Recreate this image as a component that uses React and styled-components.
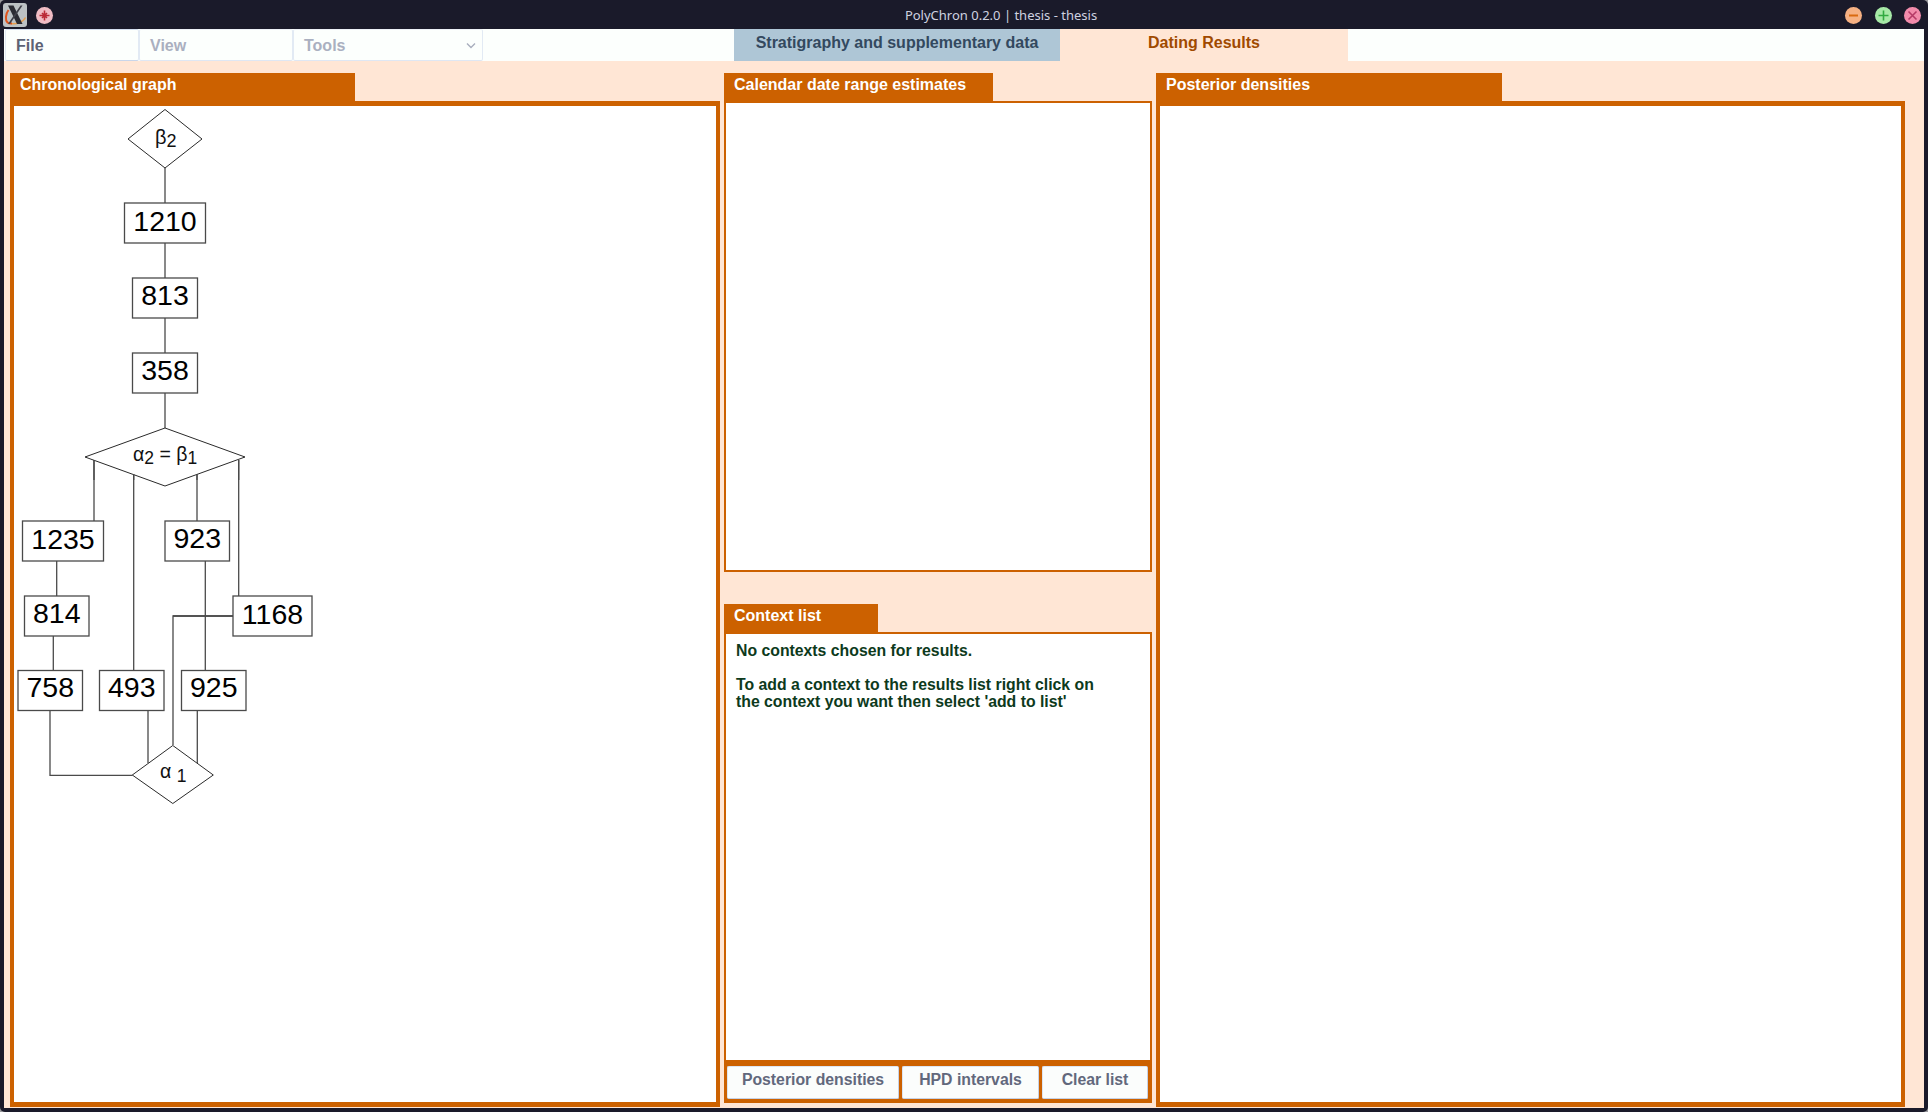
import React from "react";
import styled, { createGlobalStyle } from "styled-components";

const Global = createGlobalStyle`
  html, body { margin: 0; padding: 0; background: #9a9a9e; }
  body { width: 1928px; height: 1112px; overflow: hidden; font-family: "Liberation Sans", Arial, sans-serif; }
  #root { width: 1928px; height: 1112px; }
`;

const Window = styled.div`
  width: 1928px; height: 1112px; box-sizing: border-box;
  display: flex; flex-direction: column;
  background: #1a1a2a; border-radius: 5px; overflow: hidden;
  padding: 0 4px 4px;
`;

const TitleBar = styled.header`
  height: 29px; flex: none; position: relative;
  display: flex; align-items: center; justify-content: space-between;
  margin: 0 -4px; padding: 0 7px 0 3px;
`;
const TitleGroup = styled.div`display: flex; align-items: center; gap: ${p => p.$gap}px;`;
const AppIcon = styled.div`
  width: 24px; height: 24px; border-radius: 3px; background: #bcc1c4; flex: none;
  display: flex; align-items: center; justify-content: center; margin-top: 1px;
`;
const Dot = styled.div`
  width: 17px; height: 17px; border-radius: 50%; background: ${p => p.$bg}; flex: none;
  display: flex; align-items: center; justify-content: center; margin-top: 1px;
`;
const TitleText = styled.div`
  position: absolute; left: 74px; right: 0; top: 0; height: 29px; line-height: 30px; text-align: center;
  font-family: "Noto Sans", sans-serif; font-size: 13px; color: #cfd2e0;
  pointer-events: none;
`;

const MenuBar = styled.nav`
  height: 32px; flex: none; display: flex; background: #fcfffd; padding-left: 1px;
`;
const MenuItem = styled.div`
  width: ${p => p.$w}px; height: 32px; box-sizing: border-box; flex: none;
  display: flex; align-items: center; justify-content: space-between;
  padding: 2px 5px 0 ${p => p.$pl}px;
  border: 1px solid #e2eaf4; border-top-color: ${p => p.$on ? "#d5dff0" : "#eef2f8"};
  border-bottom: 1px solid ${p => p.$on ? "#c9d6ea" : "#dfe7f3"}; border-radius: 2px;
  font-size: 16px; font-weight: bold; color: ${p => p.$on ? "#5c6274" : "#aab0c0"};
`;
const TabSpacer = styled.div`width: 251px; flex: none;`;
const Tab = styled.div`
  width: ${p => p.$w}px; height: 32px; flex: none; text-align: center; line-height: 28px;
  font-size: 16px; font-weight: bold;
  background: ${p => p.$active ? "#ffe6d5" : "#aec6d6"};
  color: ${p => p.$active ? "#a04a00" : "#33495f"};
`;

const Workspace = styled.main`
  flex: 1; display: flex; gap: 4px; background: #ffe6d5;
  padding: 12px 19px 1px 6px; min-height: 0;
`;
const Column = styled.section`
  width: ${p => p.$w}px; flex: none; display: flex; flex-direction: column;
  padding-bottom: ${p => p.$pb || 0}px;
`;
const Heading = styled.h2`
  margin: 0; width: ${p => p.$w}px; height: 28px; flex: none; box-sizing: border-box;
  background: #cc6100; color: #fff; font-size: 16px; font-weight: bold;
  line-height: 18px; padding: 3px 0 0 ${p => p.$pl}px;
`;
const BigBox = styled.div`
  flex: 1; background: #fff; min-height: 0; box-sizing: border-box;
  border: 4px solid #cc6100; border-top-width: 5px; border-bottom-width: 5px;
`;
const ThinBox = styled.div`
  height: ${p => p.$h}px; flex: none; box-sizing: border-box; background: #fff;
  border: 2px solid #cc6100; ${p => p.$open && "border-bottom: 0;"}
  margin-bottom: ${p => p.$mb || 0}px;
`;
const Notice = styled.div`
  padding: 7.5px 0 0 10px;
  font-size: 15.8px; font-weight: bold; line-height: 17px; color: #0d3a1c;
`;
const NoticeLine = styled.div`min-height: 17px;`;
const ButtonBar = styled.div`
  height: 43px; flex: none; box-sizing: border-box; background: #cc6100;
  display: flex; gap: 3px; padding: 6px 4px 4px 3px;
`;
const Btn = styled.button`
  width: ${p => p.$w}px; box-sizing: border-box; padding: 0 0 6px; margin: 0;
  background: #fbfdfc; border: 1px solid #dde5f1; border-bottom: 1px solid #c7d2e6;
  border-right: 1px solid #c7d2e6; border-radius: 2px;
  font-family: inherit; font-size: 15.8px; font-weight: bold; color: #62687c;
`;
const GraphSvg = styled.svg`display: block;`;

const boxes = [
  ["1210", 124.5, 203, 81, 40],
  ["813", 132.5, 278, 65, 40],
  ["358", 132.5, 353, 65, 40],
  ["1235", 22.5, 521, 81, 40],
  ["923", 165, 521, 64.5, 40],
  ["814", 24.5, 596, 64.5, 40],
  ["1168", 233, 596, 79, 40],
  ["758", 18, 670.5, 64.5, 40],
  ["493", 99.5, 670.5, 64.5, 40],
  ["925", 181.5, 670.5, 64.5, 40],
];
const edges = [
  "M165 168V203", "M165 243V278", "M165 318V353", "M165 393V428",
  "M94 460V521", "M133.7 474V670.5", "M197 474V521", "M238.7 460V596",
  "M56.7 561V596", "M53.3 636V670.5", "M205.3 561V670.5",
  "M233 616H173V745", "M50 710.5V775.3H132.5", "M148 710.5V763", "M197.3 710.5V763",
];
const LINE = "#4a4a4a";

const Graph = () => (
  <GraphSvg viewBox="14 106 702 996" width="702" height="996" fontFamily="'Liberation Sans', Arial, sans-serif">
    <g stroke={LINE} strokeWidth="1.3" fill="none">
      {edges.map(d => <path key={d} d={d} />)}
    </g>
    <g stroke="#2a2a2a" strokeWidth="1" fill="#fff">
      <polygon points="165,109.5 202,139 165,168 128,139" />
      <polygon points="165,428 245,457 165,486 85,457" />
      <polygon points="172.8,745.5 213.3,775 172.8,803.5 132.3,775" />
    </g>
    <path d="M94 460V480M133.7 474V480M197 474V480M238.7 460V480" stroke={LINE} strokeWidth="1.3" fill="none" />
    {boxes.map(([label, x, y, w, h]) => (
      <g key={label}>
        <rect x={x} y={y} width={w} height={h} fill="#fff" stroke={LINE} strokeWidth="1.3" />
        <text x={x + w / 2} y={y + (label.length === 4 ? 27.5 : 26.5)} fontSize="28.5" textAnchor="middle" fill="#000">{label}</text>
      </g>
    ))}
    <path d="M233 616H173" stroke={LINE} strokeWidth="1.3" fill="none" />
    <text x="155" y="144" fontSize="20" fill="#111">
      <tspan>β</tspan><tspan fontSize="18" dy="3">2</tspan>
    </text>
    <text x="133" y="460.5" fontSize="19.5" fill="#111">
      <tspan>α</tspan><tspan fontSize="17.5" dy="3">2</tspan><tspan dy="-3"> = β</tspan><tspan fontSize="17.5" dy="3">1</tspan>
    </text>
    <text x="160" y="778" fontSize="19.5" fill="#111">
      <tspan>α </tspan><tspan fontSize="17.5" dy="3.5">1</tspan>
    </text>
  </GraphSvg>
);

const XLogo = () => (
  <svg width="24" height="24" viewBox="0 0 24 24">
    <path d="M8 20.5C13 21.5 20 19.5 22.5 14.5" fill="none" stroke="#e8a050" strokeWidth="1.5" />
    <path d="M5.5 7C2.5 11 2 17 4.5 19.5C5.5 20.5 7 20.5 9 20.5" fill="none" stroke="#e0531c" strokeWidth="2" />
    <path d="M5 2.5h5.5l9 18.5h-5.5z" fill="#2b2b33" />
    <path d="M17.5 2.5h2L7 21H5z" fill="#3f3f48" />
  </svg>
);

const Marks = {
  pin: <path d="M8.5 3.5v10M3.5 8.5h10M6 6l5 5M11 6l-5 5" stroke="#bb2a36" strokeWidth="1.6" />,
  min: <path d="M4 8.5h9" stroke="#d96a10" strokeWidth="1.8" />,
  max: <path d="M8.5 3.5v10M3.5 8.5h10" stroke="#30aa40" strokeWidth="1.6" />,
  close: <path d="M4.5 4.5l8 8M12.5 4.5l-8 8" stroke="#b53a66" strokeWidth="1.6" />,
};
const Mark = ({ name }) => <svg width="17" height="17" viewBox="0 0 17 17">{Marks[name]}</svg>;

const Chevron = () => (
  <svg width="12" height="8" viewBox="0 0 12 8"><path d="M2 1.5l4 4 4-4" fill="none" stroke="#a8aebd" strokeWidth="1.4" /></svg>
);

export default function App() {
  return (
    <>
      <Global />
      <Window>
        <TitleBar>
          <TitleGroup $gap={9}>
            <AppIcon><XLogo /></AppIcon>
            <Dot $bg="#f0bcc4"><Mark name="pin" /></Dot>
          </TitleGroup>
          <TitleText>PolyChron 0.2.0 | thesis - thesis</TitleText>
          <TitleGroup $gap={12.5}>
            <Dot $bg="#f6b183"><Mark name="min" /></Dot>
            <Dot $bg="#a7e9a7"><Mark name="max" /></Dot>
            <Dot $bg="#f28bab"><Mark name="close" /></Dot>
          </TitleGroup>
        </TitleBar>
        <MenuBar>
          <MenuItem $w={134} $pl={10} $on>File</MenuItem>
          <MenuItem $w={154} $pl={10}>View</MenuItem>
          <MenuItem $w={190} $pl={10}>Tools<Chevron /></MenuItem>
          <TabSpacer />
          <Tab $w={326}>Stratigraphy and supplementary data</Tab>
          <Tab $w={288} $active>Dating Results</Tab>
        </MenuBar>
        <Workspace>
          <Column $w={710}>
            <Heading $w={345} $pl={10}>Chronological graph</Heading>
            <BigBox><Graph /></BigBox>
          </Column>
          <Column $w={428} $pb={4}>
            <Heading $w={269} $pl={10}>Calendar date range estimates</Heading>
            <ThinBox $h={471} $mb={32} />
            <Heading $w={154} $pl={10}>Context list</Heading>
            <ThinBox $h={428} $open>
              <Notice>
                <NoticeLine>No contexts chosen for results.</NoticeLine>
                <NoticeLine />
                <NoticeLine>To add a context to the results list right click on</NoticeLine>
                <NoticeLine>the context you want then select 'add to list'</NoticeLine>
              </Notice>
            </ThinBox>
            <ButtonBar>
              <Btn $w={172}>Posterior densities</Btn>
              <Btn $w={137}>HPD intervals</Btn>
              <Btn $w={106}>Clear list</Btn>
            </ButtonBar>
          </Column>
          <Column $w={749}>
            <Heading $w={346} $pl={10}>Posterior densities</Heading>
            <BigBox />
          </Column>
        </Workspace>
      </Window>
    </>
  );
}
